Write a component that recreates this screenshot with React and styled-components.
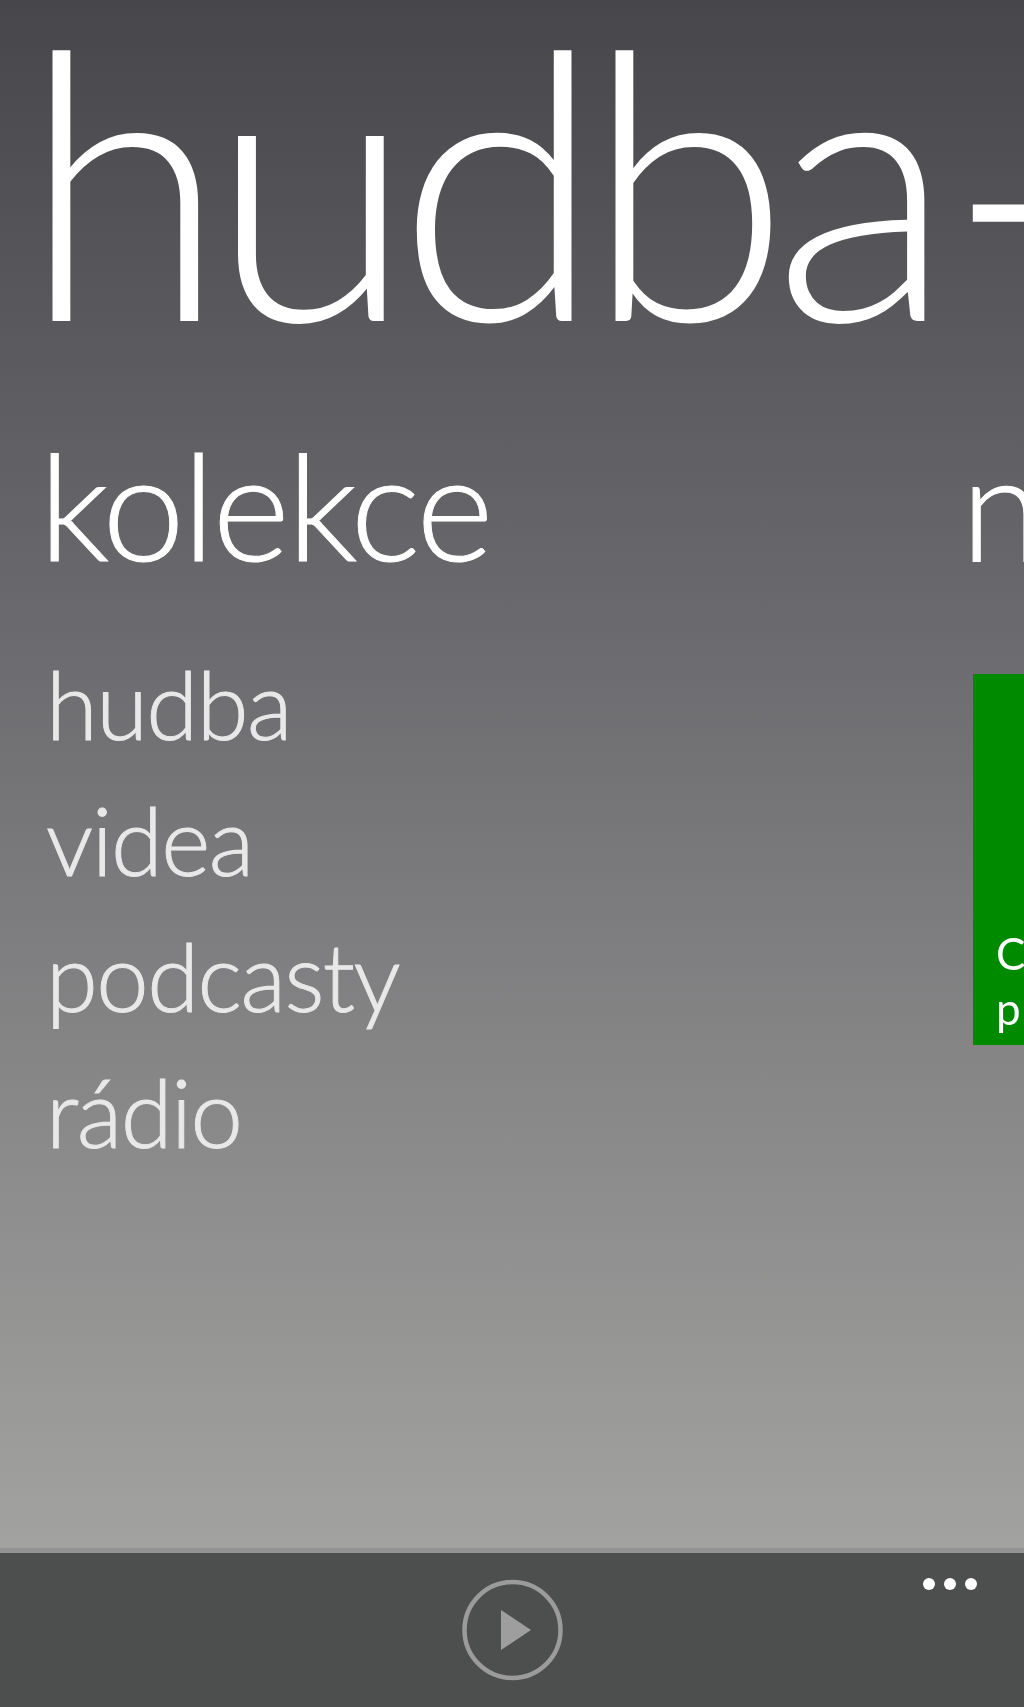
import React from 'react'
import styled, { createGlobalStyle } from 'styled-components'

const GlobalStyle = createGlobalStyle`
    html, body {
        margin: 0;
        padding: 0;
        background: #4d4e4e;
    }
`;

const collection = ['hudba', 'videa', 'podcasty', 'rádio'];

function App() {
    return (
        <>
            <GlobalStyle />
            <Phone>
                <Panorama>
                    <Title>hudba<PlusSign>+</PlusSign>videa</Title>
                    <Sections>
                        <Section>
                            <SectionTitle>kolekce</SectionTitle>
                            <NavList>
                                {collection.map(item => (
                                    <NavItem key={item}>{item}</NavItem>
                                ))}
                            </NavList>
                        </Section>
                        <Section>
                            <NewTitle>nové</NewTitle>
                            <Tile>
                                <TileText>Co je nového</TileText>
                                <TileText>podcasty</TileText>
                            </Tile>
                        </Section>
                    </Sections>
                </Panorama>
                <AppBar>
                    <PlayButton aria-label="play">
                        <svg width="104" height="104" viewBox="0 0 104 104">
                            <circle cx="52.5" cy="52" r="48" fill="none" stroke="#9b9b9b" strokeWidth="4.5" />
                            <path d="M41 32 L71 52 L41 72 Z" fill="#9e9e9e" />
                        </svg>
                    </PlayButton>
                    <MoreDots>
                        <Dot />
                        <Dot />
                        <Dot />
                    </MoreDots>
                </AppBar>
            </Phone>
        </>
    )
}

const Phone = styled.div`
    width: 1024px;
    height: 1707px;
    display: flex;
    flex-direction: column;
    overflow: hidden;
    font-family: "Lato", "Open Sans", sans-serif;
    filter: blur(0.6px);
`;

const Panorama = styled.div`
    flex: 1;
    min-height: 0;
    padding-left: 39px;
    overflow: hidden;
    background: linear-gradient(180deg, #47474b 0%, #6a6a6e 40%, #858586 68%, #a2a2a0 100%);
    border-bottom: 5px solid #939393;
`;

const Title = styled.h1`
    margin: 0 0 0 -17px;
    height: 411px;
    font-size: 372px;
    line-height: 354px;
    font-weight: 300;
    letter-spacing: -17px;
    color: #ffffff;
    white-space: nowrap;
`;

const PlusSign = styled.span`
    display: inline-block;
    margin-left: 11px;
    font-size: 465px;
    line-height: 0;
    transform: translateY(48px);
`;

const Sections = styled.div`
    display: grid;
    grid-template-columns: 934px 500px;
    width: 1434px;
`;

const Section = styled.section`
    display: flex;
    flex-direction: column;
`;

const SectionTitle = styled.h2`
    margin: 0 0 39px;
    height: 186px;
    font-size: 148px;
    line-height: 186px;
    font-weight: 300;
    letter-spacing: -2.5px;
    color: #ffffff;
    -webkit-text-stroke: 1px #ffffff;
`;

const NewTitle = styled(SectionTitle)`
    margin-left: -12px;
`;

const NavList = styled.ul`
    margin: 0 0 0 7px;
    padding: 0;
    list-style: none;
    display: flex;
    flex-direction: column;
`;

const NavItem = styled.li`
    height: 136px;
    font-size: 94px;
    line-height: 136px;
    font-weight: 300;
    letter-spacing: -1.5px;
    color: #e8e8e8;
    -webkit-text-stroke: 1px #e8e8e8;
`;

const Tile = styled.div`
    width: 370px;
    height: 371px;
    margin-top: 38px;
    box-sizing: border-box;
    padding: 0 23px 9px;
    display: flex;
    flex-direction: column;
    justify-content: flex-end;
    background: #008a00;
`;

const TileText = styled.div`
    font-size: 44px;
    line-height: 55px;
    letter-spacing: 3px;
    color: #ffffff;
    white-space: nowrap;
`;

const AppBar = styled.div`
    height: 154px;
    flex-shrink: 0;
    position: relative;
    display: flex;
    justify-content: center;
    align-items: center;
    background: #4d4e4e;
`;

const PlayButton = styled.button`
    padding: 0;
    border: 0;
    width: 104px;
    height: 104px;
    background: none;
    display: block;
    font-size: 0;
`;

const MoreDots = styled.div`
    position: absolute;
    top: 25px;
    right: 47px;
    display: flex;
    gap: 9px;
`;

const Dot = styled.span`
    width: 12px;
    height: 12px;
    border-radius: 50%;
    background: #ffffff;
`;

export default App
